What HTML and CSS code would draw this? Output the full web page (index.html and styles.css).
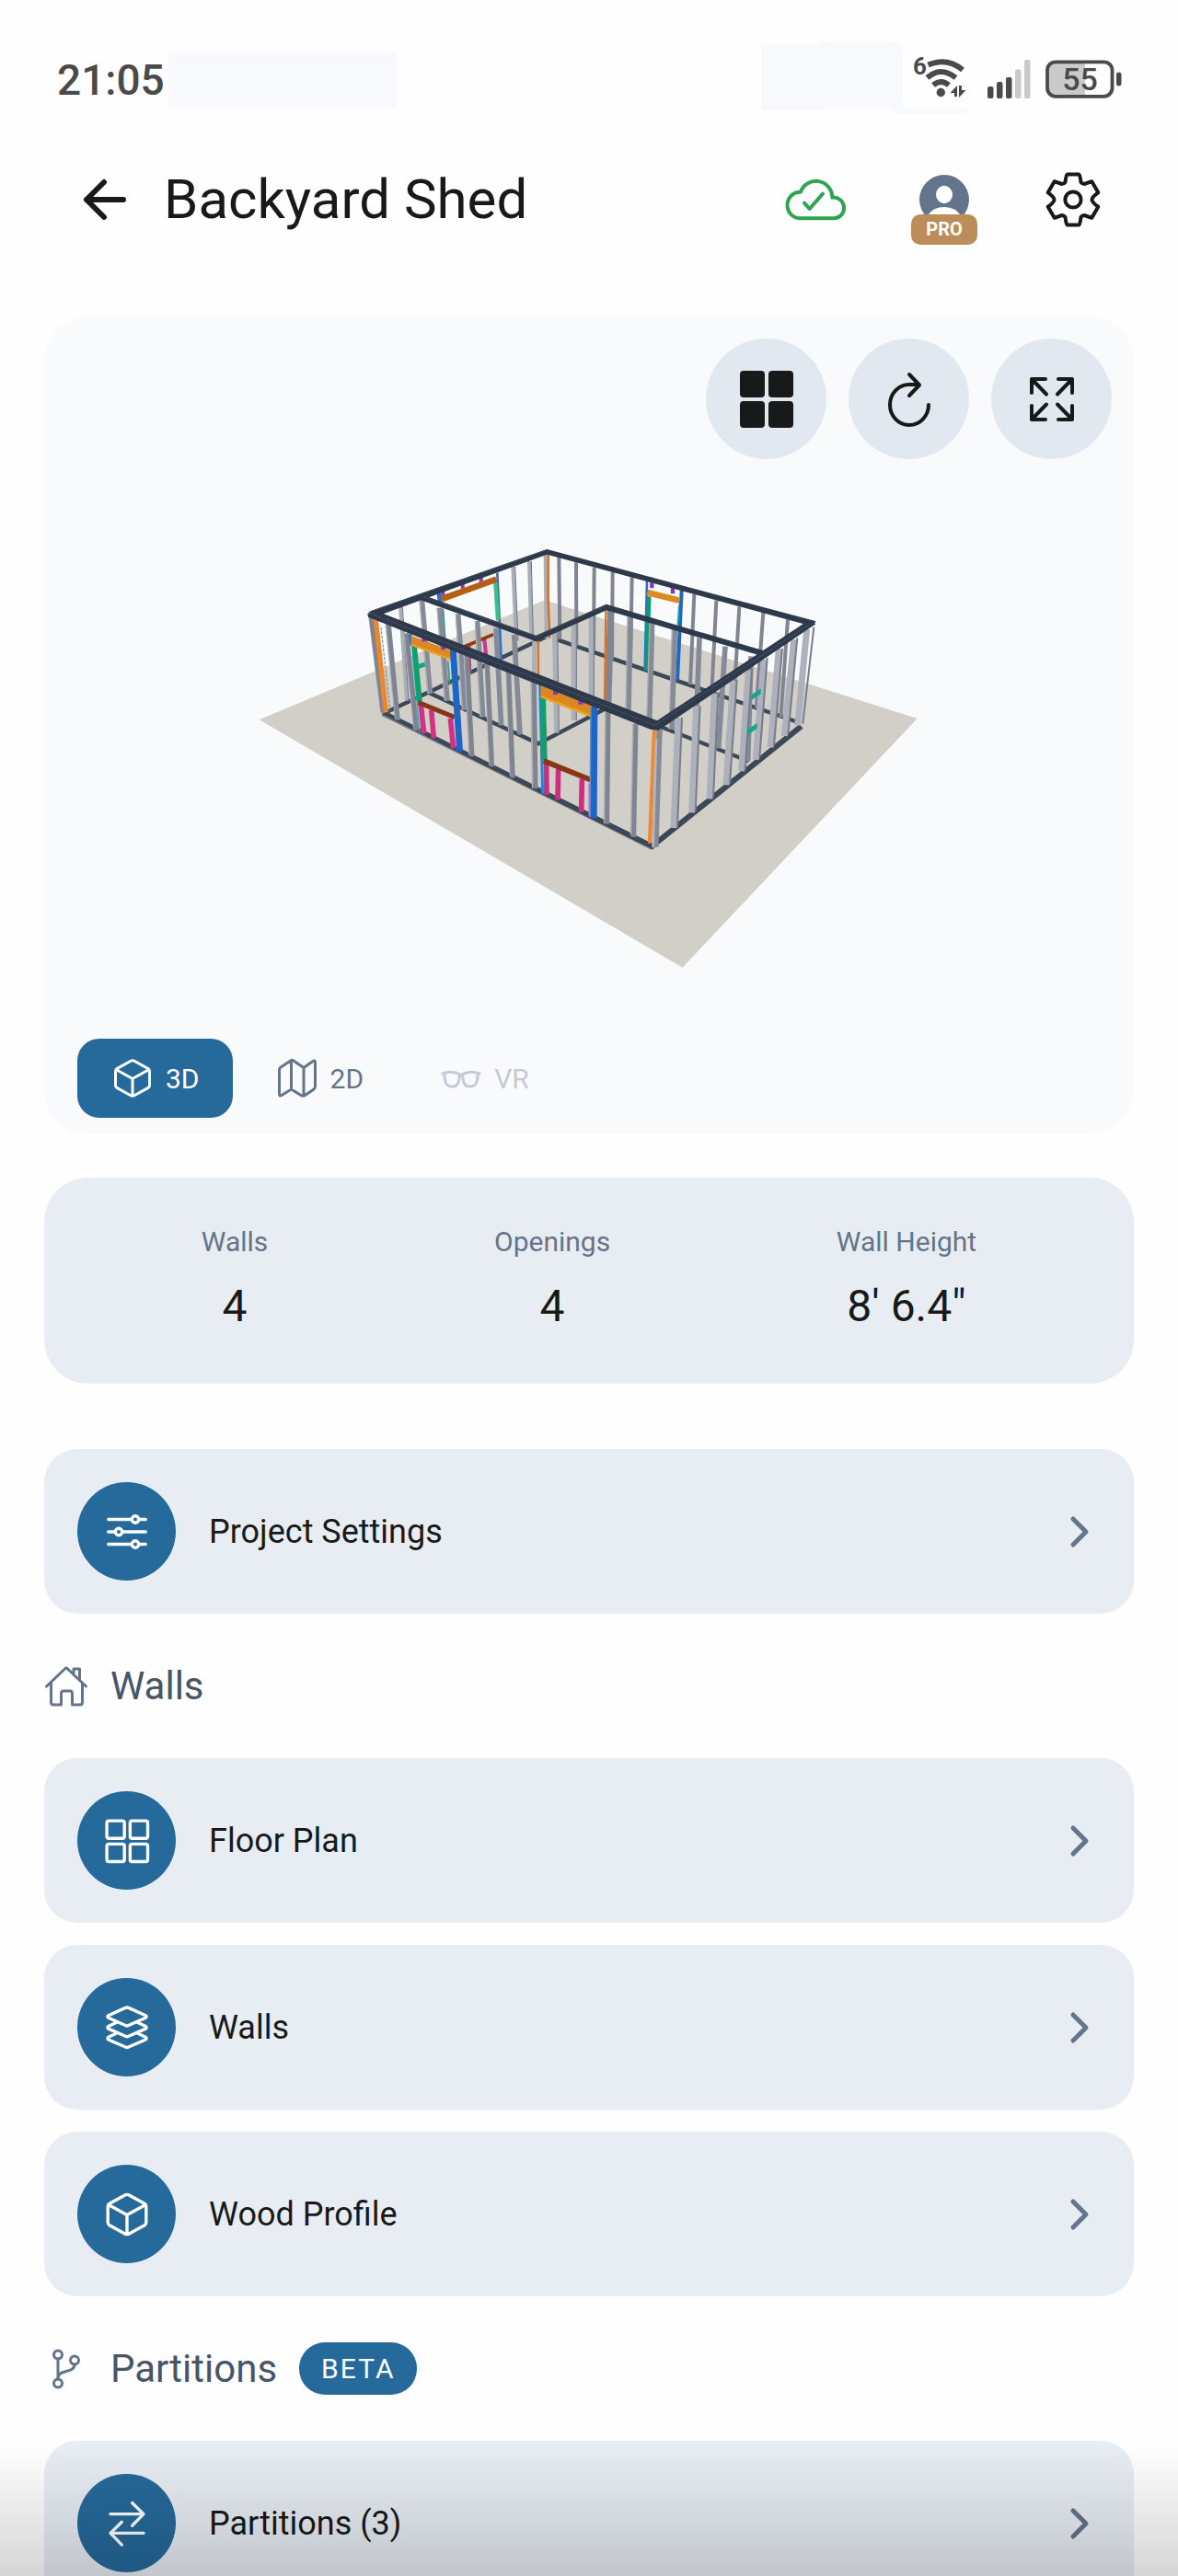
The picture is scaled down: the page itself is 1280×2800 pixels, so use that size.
FILE: index.html
```html
<!DOCTYPE html>
<html lang="en">
<head>
<meta charset="utf-8">
<meta name="viewport" content="width=device-width, initial-scale=1">
<title>Backyard Shed</title>
<link rel="stylesheet" href="styles.css">
</head>
<body>
<svg class="sprite" aria-hidden="true">
  <symbol id="cube" viewBox="0 0 48 48"><path d="M22 5.300Q24 4.200 26 5.300L41 13.600Q42.500 14.500 42.500 16.300V31.700Q42.500 33.500 41 34.400L26 42.700Q24 43.800 22 42.700L7 34.400Q5.500 33.500 5.500 31.700V16.300Q5.500 14.500 7 13.600ZM6.500 14.800 24 24.500 41.500 14.800M24 24.500V43"/></symbol>
  <symbol id="map" viewBox="0 0 48 48"><path d="M17.500 4.500 6 12Q4.500 13 4.500 15V41Q4.500 44 7 42.500L17.500 36 28 42.500Q30.500 44 32.500 42.500L42 36Q43.500 35 43.500 33V7Q43.500 4 41 5.500L31 12.500 20 5Q18.500 4 17.500 4.500ZM17.500 5V36M31 12.500V43"/></symbol>
  <symbol id="glasses" viewBox="0 0 48 48"><path d="M4 19Q14 15 24 20.500 34 15 44 19M6 19C6 28 7.500 33 14.500 33 21.500 33 22 26 22.500 20M42 19C42 28 40.500 33 33.500 33 26.500 33 26 26 25.500 20"/></symbol>
  <symbol id="sliders" viewBox="0 0 48 48"><path d="M6 12H28M36 12H42M6 24H12M20 24H42M6 36H28M36 36H42"/><circle cx="32" cy="12" r="3.300"/><circle cx="16" cy="24" r="3.300"/><circle cx="32" cy="36" r="3.300"/></symbol>
  <symbol id="grid" viewBox="0 0 48 48"><rect x="4.500" y="4.500" width="17" height="17" rx="2"/><rect x="27" y="4.500" width="17" height="17" rx="2"/><rect x="4.500" y="27" width="17" height="17" rx="2"/><rect x="27" y="27" width="17" height="17" rx="2"/></symbol>
  <symbol id="layers" viewBox="0 0 48 48"><path d="M22.500 4.800Q24 4 25.500 4.800L42 12.200Q43.500 13.300 42 14.400L25.500 21.800Q24 22.600 22.500 21.800L6 14.400Q4.500 13.300 6 12.200ZM14 18.800 6 22.700Q4.500 24 6 25L22.500 32.200Q24 33 25.500 32.200L42 25Q43.500 24 42 22.700L34 18.800M14 29.300 6 33.200Q4.500 34.500 6 35.500L22.500 42.700Q24 43.500 25.500 42.700L42 35.500Q43.500 34.500 42 33.200L34 29.300"/></symbol>
  <symbol id="swap" viewBox="0 0 48 48"><path d="M8 14.800H40M29 4 40 14.800 29 26M40 33.200H8M19 22.500 8 33.200 19 44.500"/></symbol>
  <symbol id="home" viewBox="0 0 48 48"><path d="M2.500 24 23 4.500Q24 3.700 25 4.500L45.500 24M7.500 20V41Q7.500 44 10 44H18.500V32Q18.500 29 21 29H28Q30.500 29 30.500 32V44H39Q41.500 44 41.500 41V20M32 9.500V5H38.500V16"/></symbol>
  <symbol id="branch" viewBox="0 0 48 48"><circle cx="15" cy="8.500" r="4.500"/><circle cx="33" cy="14.500" r="4.500"/><circle cx="15" cy="39.500" r="4.500"/><path d="M15 13V35M33 19C33 29 15 24 15 34"/></symbol>
  <symbol id="chevron" viewBox="0 0 48 48"><path d="M18 10 32 24 18 38"/></symbol>
</svg>

<div class="app">
  <div class="statusbar">
    <span class="clock">21:05</span>
    <span class="notice"></span>
    <svg class="status-icons" viewBox="827 45 393 84" role="img" aria-label="Wi-Fi 6, signal, battery 55 percent">
      <path fill="#f8f9fc" d="M827 48H890V45H975V47H980V51H981V117H1051V123H968V118H896V120H827Z"/>
      <g fill="none" stroke="#4a4a4a" stroke-width="6">
        <path d="M1008.500 70.500Q1029 62 1046 76"/>
        <path d="M1007.500 84.500Q1022 71.500 1038.500 84.500"/>
        <path d="M1014 92.500Q1022.500 85.500 1031 92.500"/>
      </g>
      <circle cx="1022.300" cy="100.500" r="4.700" fill="#4a4a4a"/>
      <path fill="#4a4a4a" d="M1040 93V105H1037V101H1032.500ZM1042 93H1045V98H1049.500L1042 106Z"/>
      <text class="wifi-gen" x="992" y="81">6</text>
      <g fill="#4a4a4a"><rect x="1073" y="94" width="6.500" height="13" rx="2"/><rect x="1083" y="89" width="6.500" height="18" rx="2"/><rect x="1093" y="84" width="6.500" height="23" rx="2"/></g>
      <g fill="#cacaca"><rect x="1103" y="75.500" width="6.500" height="31.500" rx="2"/><rect x="1113" y="65" width="6.500" height="42" rx="2"/><path d="M1179 67H1147Q1138 67 1138 76V96Q1138 105 1147 105H1179Z"/></g>
      <rect x="1138" y="67.300" width="70.500" height="37.500" rx="9" fill="none" stroke="#4a4a4a" stroke-width="3.800"/>
      <rect x="1213" y="78.500" width="5.500" height="15" rx="2.700" fill="#4a4a4a"/>
      <text class="battery" x="1173.500" y="98" text-anchor="middle">55</text>
    </svg>
  </div>

  <header class="topbar">
    <button class="icon-button" aria-label="Back">
      <svg width="48" height="48" viewBox="0 0 48 48" class="line heavy"><path d="M44 24H4M23 5 4 24 23 43"/></svg>
    </button>
    <h1>Backyard Shed</h1>
    <button class="icon-button" aria-label="Synced">
      <svg class="cloud" width="70" height="50" viewBox="36 430 210 150"><path d="M90 566A42 43 0 0 1 93 480A53 53 0 0 1 196 498A34 34 0 0 1 204 566ZM105 516 122 535 165 486"/></svg>
    </button>
    <button class="icon-button" aria-label="Account">
      <svg width="54" height="54" viewBox="0 0 54 54"><circle cx="27" cy="27" r="27" fill="#64748b"/><ellipse cx="27" cy="21.500" rx="9" ry="9.700" fill="#fff"/><path d="M8 46Q14 35 27 35T46 46L40 54H14Z" fill="#fff"/></svg>
      <span class="pro">PRO</span>
    </button>
    <button class="icon-button" aria-label="Settings">
      <svg width="60" height="60" viewBox="-30 -30 60 60" class="line medium"><path d="M-8.500-19Q-7.500-27.500-6.500-27.500H6.500Q7.500-27.500 8.500-19 10-17 12.200-17L20.300-19.800 27.300-7.700Q20.500-3 20.500 0T27.300 7.700L20.300 19.800 12.200 17Q10 17 8.500 19 7.500 27.500 6.500 27.500H-6.500Q-7.500 27.500-8.500 19-10 17-12.200 17L-20.300 19.800-27.300 7.700Q-20.500 3-20.500 0T-27.300-7.700L-20.300-19.800-12.200-17Q-10-17-8.500-19Z"/><circle r="8.600"/></svg>
    </button>
  </header>

  <main>
    <section class="viewer">
      <div class="tools">
        <button aria-label="Views"><svg width="58" height="62" viewBox="0 0 58 62" fill="#181a19"><rect width="27" height="29" rx="4"/><rect x="31" width="27" height="29" rx="4"/><rect y="33" width="27" height="29" rx="4"/><rect x="31" y="33" width="27" height="29" rx="4"/></svg></button>
        <button aria-label="Reset view"><svg width="48" height="60" viewBox="0 0 48 60" class="line medium"><path d="M45 36A21 22 0 1 1 24 14H34M24 3 35 14.500 24 26"/></svg></button>
        <button aria-label="Full screen"><svg width="50" height="50" viewBox="0 0 50 50" class="line medium"><path d="M18 3H3V18M3 3 19 19.500M32 3H47V18M47 3 31 19.500M3 32V47H18M3 47 19 30.500M47 32V47H32M47 47 31 30.500"/></svg></button>
      </div>

      <svg class="scene" viewBox="0 0 2280 1500" role="img" aria-label="3D model of the shed frame">
        <path fill="#d2cfc8" d="M65 637 995 247 2210 633 1445 1445Z"/>
        <g fill="none" stroke="#3d4857" stroke-width="13">
          <path d="M480 612 1003 365M1030 374 1822 645M620 550 975 715 1195 600M1195 590 1660 772"/>
        </g>
        <!-- left and rear outer walls -->
        <g stroke="#a9aeb8" stroke-width="12">
          <path d="M525 268 546 575M892 138 903 380M945 120 952 365M998 98 1001 372"/>
        </g>
        <g stroke="#808591" stroke-width="12">
          <path d="M1042 108 1045 374M1098 124 1099 395M1157 140 1155 412M1217 155 1215 440M1280 172 1275 462M1483 228 1470 522M1555 248 1540 550M1630 268 1612 572M1708 288 1685 600M1788 310 1765 630"/>
        </g>
        <path stroke="#6e7480" stroke-width="3" d="M532 268 552 575M899 138 909 380M952 120 958 365"/>
        <path stroke="#db681b" stroke-width="7" d="M1007 96V240L1012 370" fill="none"/>
        <path stroke="#2a70cf" stroke-width="15" d="M651 225 655 255"/>
        <path stroke="#2a70cf" stroke-width="8" d="M841 158 854 440"/>
        <path stroke="#3cbd85" stroke-width="13" d="M835 188 843 312"/>
        <path stroke="#12a072" stroke-width="5" d="M664 275 672 385"/>
        <path stroke="#8f35bf" stroke-width="12" d="M664 218V232M728 195V209M788 172V188"/>
        <path stroke="#b65e12" stroke-width="20" d="M660 243 838 179"/>
        <path stroke="#d33288" stroke-width="12" d="M748 395 751 490M799 375 805 432"/>
        <path stroke="#913713" stroke-width="11" d="M728 401 828 359"/>
        <path stroke="#2a6fd0" stroke-width="8" d="M1329 185 1322 475"/>
        <path stroke="#0e9d69" stroke-width="13" d="M1336 235 1328 476"/>
        <path stroke="#1e66c7" stroke-width="12" d="M1442 215 1428 508"/>
        <path stroke="#31b58c" stroke-width="4" d="M1433 262 1427 345"/>
        <path stroke="#8337bc" stroke-width="13" d="M1345 190V208M1413 206V226"/>
        <path stroke="#dc8a22" stroke-width="20" d="M1330 222 1435 248"/>
        <!-- partitions -->
        <g stroke="#858a96" stroke-width="17">
          <path d="M595 245 622 552M653 272 678 575M713 292 735 605M776 315 794 628M837 338 854 655M896 360 915 685"/>
          <path d="M1275 300 1269 605M1346 320 1337 638M1420 340 1410 668M1500 370 1488 690M1584 398 1562 730M1668 430 1658 772"/>
        </g>
        <path stroke="#a9aeb8" stroke-width="4" d="M588 245 615 552M645 272 670 575M706 292 727 605M769 315 786 628M1266 300 1260 605M1338 320 1328 638M1411 340 1401 668"/>
        <g stroke="#abb0b9" stroke-width="16">
          <path d="M963 380 960 715M1028 350 1034 680M1090 320V640M1147 295V600"/>
        </g>
        <path stroke="#7d828e" stroke-width="4" d="M1037 350 1042 680M1099 320V640M1156 295V600"/>
        <path stroke="#808591" stroke-width="22" d="M1211 275 1202 590"/>
        <path stroke="#db7427" stroke-width="7" d="M1195 280 1191 585M975 380V510"/>
        <!-- plates over the back half -->
        <path fill="#2e394b" d="M420 286 1003 81 1880 316 1868 332 1003 98 455 297Z"/>
        <path fill="none" stroke="#2e394b" stroke-width="18" d="M588 236 968 372 1197 270 1705 420"/>
        <path fill="none" stroke="#414d60" stroke-width="3" d="M600 235 968 365 1195 264M430 283 1003 83"/>
        <!-- front and right walls -->
        <path fill="none" stroke="#3d4857" stroke-width="18" d="M468 615 1345 1050 1832 658"/>
        <path fill="none" stroke="#8d929b" stroke-width="3" d="M466 621 1342 1060"/>
        <g stroke="#a9aeb8" stroke-width="5">
          <path d="M423 300 462 612M478 325 509 635M537 350 570 668M733 415 750 752M801 440 816 786M870 470 884 822M951 505 956 860M1194 610 1190 975M1284 650 1277 1015"/>
        </g>
        <g stroke="#7f8491" stroke-width="15">
          <path d="M430 300 469 615M487 325 517 638M546 355 578 672M742 420 759 757M808 445 824 790M878 475 892 827M961 510 966 862M1203 610 1199 977M1293 650 1286 1020"/>
        </g>
        <path stroke="#eb882e" stroke-width="16" d="M445 310 478 613"/>
        <path stroke="#777c88" stroke-width="3" stroke-dasharray="10 4" d="M462 335 492 610"/>
        <g stroke="#acb1bb" stroke-width="21">
          <path d="M1431 630 1416 990M1490 592 1475 940M1549 550 1533 895M1610 510 1587 850M1660 475 1637 805M1710 440 1684 767M1759 405 1731 727M1808 375 1777 690M1850 342 1820 655"/>
        </g>
        <path stroke="#787d89" stroke-width="6" d="M1443 630 1428 988M1502 592 1487 936M1561 548 1545 890M1622 508 1599 845M1671 470 1649 800M1721 435 1696 760M1770 405 1743 720M1819 370 1789 685M1873 335 1837 650"/>
        <path fill="#16a58c" d="M1669 556 1700 535V553L1669 573ZM1656 669 1688 648V665L1656 688Z"/>
        <path stroke="#ed8931" stroke-width="13" d="M1353 670 1338 1040"/>
        <path stroke="#858a95" stroke-width="19" d="M1370 668 1357 1052"/>
        <path stroke="#b2b6bf" stroke-width="8" d="M1359 700 1349 1054"/>
        <!-- window in the front wall, left -->
        <path stroke="#2a72d2" stroke-width="11" d="M557 358 562 395"/>
        <path stroke="#25a9c0" stroke-width="4" d="M563 395 588 678"/>
        <path stroke="#0ea06d" stroke-width="17" d="M570 390 588 578"/>
        <path stroke="#16a58c" stroke-width="15" d="M583 464 606 456"/>
        <path stroke="#d33086" stroke-width="17" d="M592 588 602 682M626 605 634 697M688 632 698 730"/>
        <path stroke="#883617" stroke-width="15" d="M583 580 702 629"/>
        <path fill="#dc8822" d="M560 362 690 412V442L560 395Z"/>
        <path stroke="#f0a41c" stroke-width="6" d="M560 392 686 438"/>
        <path stroke="#25a474" stroke-width="5" d="M680 445 686 520"/>
        <path stroke="#8f35bf" stroke-width="14" d="M602 368V382M665 393V409"/>
        <path stroke="#4089de" stroke-width="4" d="M689 420 711 738"/>
        <path stroke="#1d65c6" stroke-width="20" d="M697 405 719 740"/>
        <!-- window in the front wall, right -->
        <path stroke="#2a84d5" stroke-width="9" d="M980 520 989 878"/>
        <path stroke="#0ea06d" stroke-width="18" d="M990 565 995 770"/>
        <path stroke="#cb2f80" stroke-width="17" d="M1001 780 1002 882M1040 798 1038 898M1117 830 1115 938"/>
        <path stroke="#df75ac" stroke-width="7" d="M1141 845 1142 952"/>
        <path stroke="#883617" stroke-width="17" d="M992 771 1145 833"/>
        <path fill="#dc8822" d="M983 527 1150 590V630L983 565Z"/>
        <path stroke="#f0a41c" stroke-width="7" d="M983 561 1148 625"/>
        <path stroke="#8f35bf" stroke-width="16" d="M1031 538V555M1113 570V587"/>
        <path stroke="#4f92dd" stroke-width="7" d="M1147 600 1145 955"/>
        <path stroke="#1d65c6" stroke-width="20" d="M1158 590 1156 957"/>
        <path fill="#2e394b" d="M418 290 452 284 1362 640 1848 318 1880 324 1366 672 1340 668 420 302Z"/>
        <path fill="none" stroke="#435064" stroke-width="3" d="M430 291 1355 655 1865 322"/>
      </svg>

      <div class="tabs">
        <button class="tab active"><svg><use href="#cube"/></svg>3D</button>
        <button class="tab"><svg><use href="#map"/></svg>2D</button>
        <button class="tab" disabled><svg><use href="#glasses"/></svg>VR</button>
      </div>
    </section>

    <dl class="stats">
      <div><dt>Walls</dt><dd>4</dd></div>
      <div><dt>Openings</dt><dd>4</dd></div>
      <div><dt>Wall Height</dt><dd>8' 6.4"</dd></div>
    </dl>

    <nav>
      <a class="row" href="#settings"><span class="disc"><svg><use href="#sliders"/></svg></span><span class="label">Project Settings</span><svg class="go"><use href="#chevron"/></svg></a>
      <h2><svg><use href="#home"/></svg>Walls</h2>
      <div class="group">
        <a class="row" href="#floor-plan"><span class="disc"><svg><use href="#grid"/></svg></span><span class="label">Floor Plan</span><svg class="go"><use href="#chevron"/></svg></a>
        <a class="row" href="#walls"><span class="disc"><svg><use href="#layers"/></svg></span><span class="label">Walls</span><svg class="go"><use href="#chevron"/></svg></a>
        <a class="row" href="#wood"><span class="disc"><svg><use href="#cube"/></svg></span><span class="label">Wood Profile</span><svg class="go"><use href="#chevron"/></svg></a>
      </div>
      <h2><svg><use href="#branch"/></svg>Partitions<span class="beta">BETA</span></h2>
      <a class="row" href="#partitions"><span class="disc"><svg><use href="#swap"/></svg></span><span class="label">Partitions (3)</span><svg class="go"><use href="#chevron"/></svg></a>
    </nav>
  </main>
  <div class="fade"></div>
</div>
</body>
</html>
```

FILE: styles.css
```css
* { box-sizing: border-box; }

body {
  margin: 0;
  background: #fefefe;
  color: #181a19;
  font-family: Roboto, "Liberation Sans", sans-serif;
}

button {
  margin: 0;
  padding: 0;
  border: 0;
  background: none;
  color: inherit;
  font: inherit;
  cursor: pointer;
}

svg { display: block; flex: none; }
.sprite { position: absolute; width: 0; height: 0; }

.app {
  display: flex;
  flex-direction: column;
  height: 100vh;
  overflow: hidden;
}

/* Status bar */
.statusbar {
  display: flex;
  flex: none;
  align-items: center;
  height: 174px;
  padding: 0 60px 0 62px;
  color: #4a4a4a;
}
.clock { font-size: 46px; font-weight: 500; }
.notice { width: 248px; height: 61px; margin-left: 4px; background: #f8f9fc; }
.status-icons { width: 393px; height: 84px; margin-left: auto; fill: #4a4a4a; }
.wifi-gen { font-size: 26px; font-weight: 700; }
.battery { font-size: 34px; font-weight: 500; }

/* Title bar */
.topbar {
  display: flex;
  flex: none;
  align-items: center;
  gap: 44px;
  height: 86px;
  margin-bottom: 84px;
  padding: 0 66px;
}
.topbar h1 {
  flex: 1;
  margin: 0 0 0 -28px;
  font-size: 60px;
  line-height: 72px;
  font-weight: 400;
}
.icon-button {
  position: relative;
  display: grid;
  place-items: center;
  width: 96px;
  height: 86px;
}
.line {
  fill: none;
  stroke: #181a19;
  stroke-linecap: round;
  stroke-linejoin: round;
}
.medium { stroke-width: 4; }
.heavy { stroke-width: 6; }
.cloud {
  fill: none;
  stroke: #2ea44f;
  stroke-width: 12;
  stroke-linecap: round;
  stroke-linejoin: round;
}
.pro {
  position: absolute;
  top: 59px;
  left: 12px;
  width: 72px;
  height: 33px;
  border-radius: 10px;
  background: #bc8d58;
  color: #fff;
  font-size: 20px;
  line-height: 33px;
  font-weight: 700;
  text-align: center;
}

main {
  flex: 1;
  min-height: 0;
  padding: 0 48px 48px;
  overflow-y: auto;
  scrollbar-width: none;
}

/* Model viewer */
.viewer {
  padding: 24px 24px 18px;
  border-radius: 48px;
  background: #f8fafc;
}
.tools { display: flex; justify-content: flex-end; gap: 24px; }
.tools button {
  display: grid;
  place-items: center;
  width: 131px;
  height: 131px;
  border-radius: 50%;
  background: #e2e8f0;
}
.scene {
  width: 100%;
  max-width: 760px;
  height: auto;
  margin: 71px auto 59px;
}
.tabs { display: flex; gap: 10px; padding-left: 12px; }
.tab {
  display: flex;
  align-items: center;
  gap: 12px;
  height: 86px;
  padding: 0 36px;
  border-radius: 24px;
  color: #64748b;
  font-size: 30px;
}
.tab svg, h2 svg {
  width: 48px;
  height: 48px;
  fill: none;
  stroke: currentColor;
  stroke-width: 3;
  stroke-linecap: round;
  stroke-linejoin: round;
}
.tab.active { background: #266a9b; color: #fff; }
.tab:disabled { color: #c4cbd6; cursor: default; }

/* Figures */
.stats {
  display: flex;
  justify-content: space-around;
  margin: 47px 0 71px;
  padding: 52px 48px 56px;
  border-radius: 48px;
  background: #e8edf4;
  text-align: center;
}
.stats div { display: grid; gap: 24px; }
.stats dt { color: #64748b; font-size: 30px; line-height: 36px; }
.stats dd { margin: 0; font-size: 48px; line-height: 56px; }

/* Menu */
.group { display: grid; gap: 24px; }
.row {
  display: flex;
  align-items: center;
  gap: 36px;
  padding: 36px;
  border-radius: 36px;
  background: #e8edf4;
  color: inherit;
  font-size: 36px;
  text-decoration: none;
}
.disc {
  display: grid;
  place-items: center;
  width: 107px;
  height: 107px;
  border-radius: 50%;
  background: #266a9b;
}
.disc svg {
  width: 54px;
  height: 54px;
  fill: none;
  stroke: #fff;
  stroke-width: 3;
  stroke-linecap: round;
  stroke-linejoin: round;
}
.label { flex: 1; }
.go {
  width: 48px;
  height: 48px;
  fill: none;
  stroke: #64748b;
  stroke-width: 5;
  stroke-linecap: round;
  stroke-linejoin: round;
}
h2 {
  display: flex;
  align-items: center;
  gap: 24px;
  height: 157px;
  margin: 0;
  color: #475569;
  font-size: 42px;
  font-weight: 400;
}
h2 svg { color: #64748b; }
.beta {
  padding: 0 24px;
  border-radius: 28px;
  background: #266a9b;
  color: #fff;
  font-size: 30px;
  line-height: 57px;
  letter-spacing: 2px;
}

.fade {
  position: fixed;
  inset: auto 0 0;
  height: 140px;
  background: linear-gradient(rgb(0 0 0 / 0), rgb(0 0 0 / 0.16));
  pointer-events: none;
}
```
